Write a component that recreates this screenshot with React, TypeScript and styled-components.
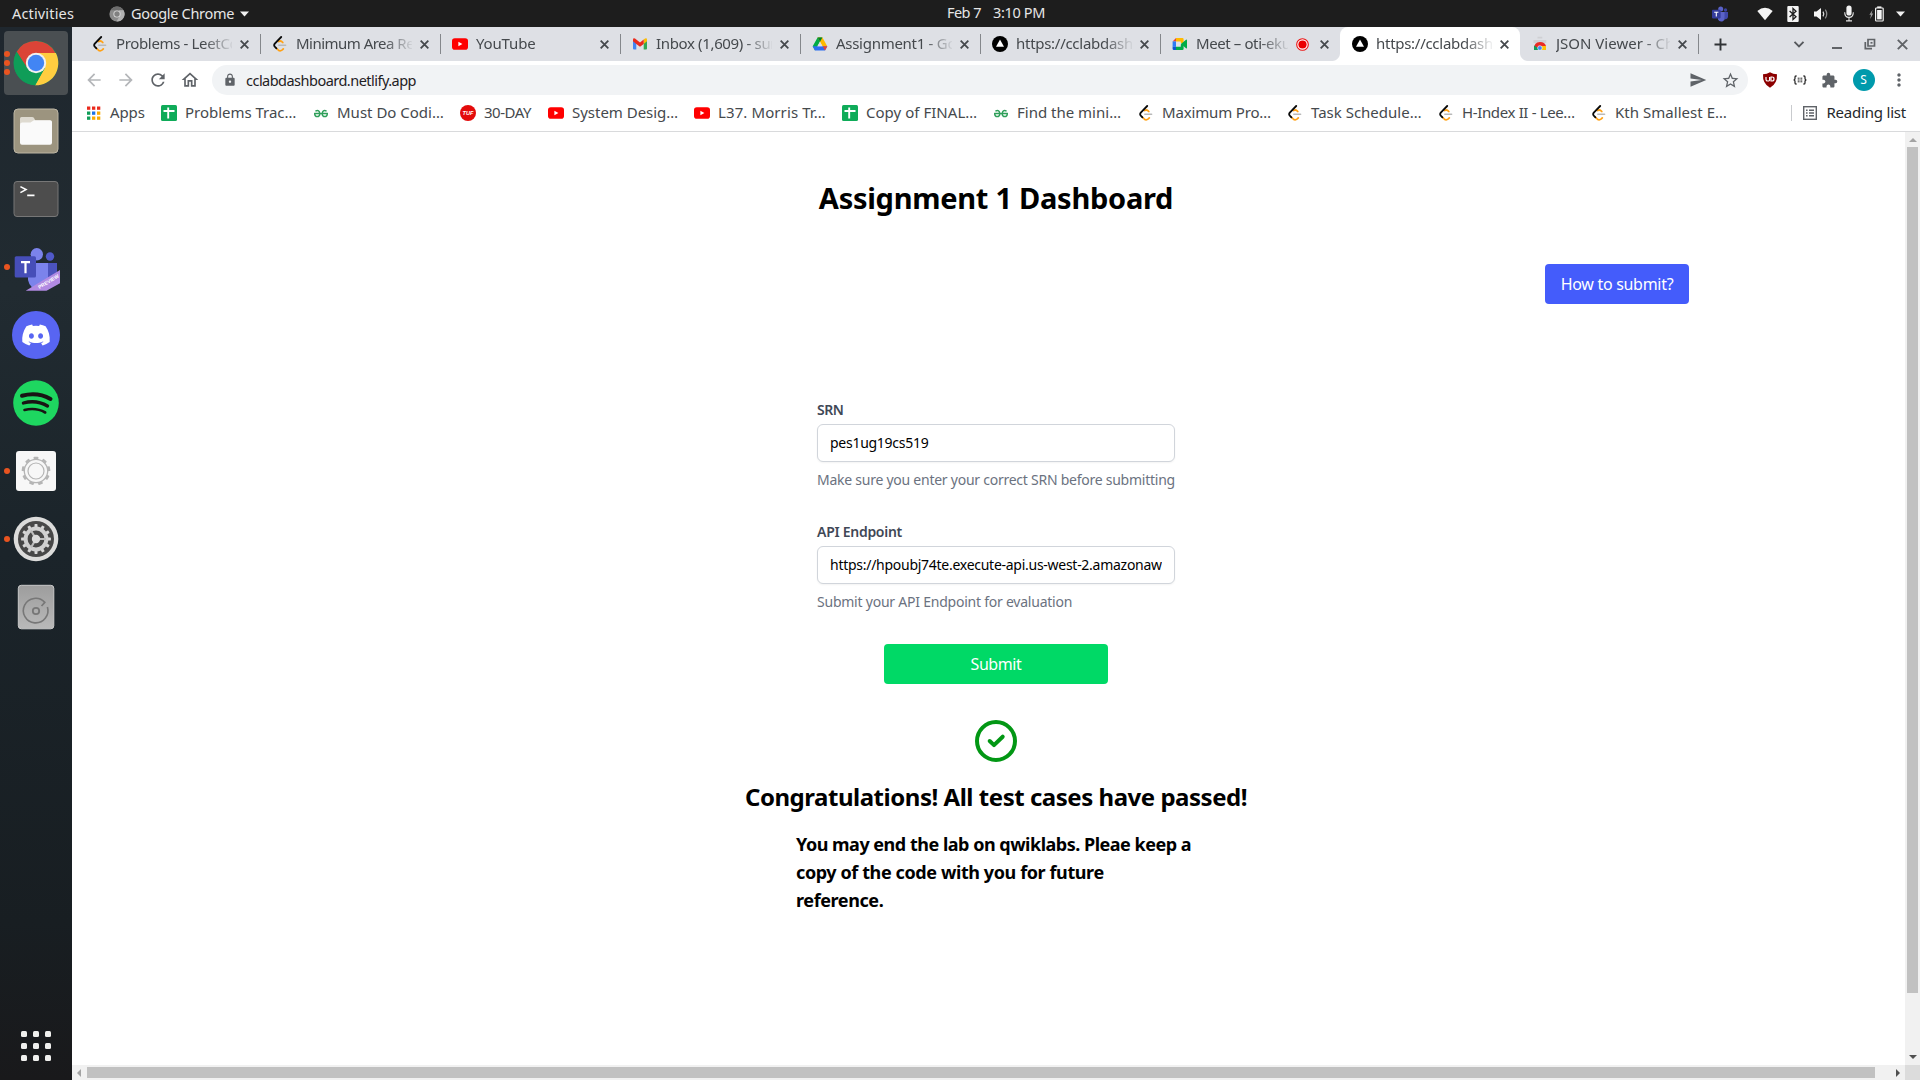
import React from 'react';
import styled, { createGlobalStyle, css } from 'styled-components';
import { FaDiscord } from 'react-icons/fa';
import { MdExtension, MdLock, MdRefresh, MdOutlineHome, MdArrowBack, MdArrowForward, MdStarBorder, MdSend, MdMoreVert } from 'react-icons/md';

const GlobalStyle = createGlobalStyle`
  * { box-sizing: border-box; }
  html, body { margin: 0; padding: 0; }
  body { font-family: "Noto Sans", "Open Sans", sans-serif; background: #fff; overflow: hidden; }
  svg { display: block; flex: none; }
`;

const Desktop = styled.div`
  width: 1920px;
  height: 1080px;
  display: flex;
  flex-direction: column;
  overflow: hidden;
`;

const Label = styled.span<{ $ls?: number }>`
  letter-spacing: ${(p) => p.$ls ?? 0}px;
  white-space: pre;
`;

/* ---------- system bar ---------- */

const SystemBar = styled.header`
  height: 27px;
  flex: none;
  display: flex;
  align-items: center;
  background: #1d1d1d;
  color: #e6e6e6;
  font-size: 14.5px;
  line-height: 27px;
`;

const SystemLeft = styled.div`
  width: 947px;
  padding-left: 12px;
  display: flex;
  align-items: center;
`;

const ActivitiesLabel = styled(Label)`
  width: 97px;
`;

const AppMenu = styled.div`
  display: flex;
  align-items: center;
  & > svg:first-child { margin-right: 6px; }
  & > svg:last-child { margin-left: 6px; }
`;

const Clock = styled.div`
  display: flex;
  gap: 12px;
  flex: 1;
  line-height: 25px;
  padding-bottom: 2px;
`;

const StatusIcons = styled.div`
  display: flex;
  align-items: center;
  gap: 12px;
  padding-right: 15px;
  & > svg:first-child { margin-right: 17px; }
  & > svg:last-child { margin-left: -1px; }
`;

/* ---------- dock ---------- */

const Workspace = styled.div`
  flex: 1;
  display: flex;
  min-height: 0;
`;

const Dock = styled.nav`
  width: 72px;
  flex: none;
  padding: 2px 0 19px;
  display: flex;
  flex-direction: column;
  background: linear-gradient(#1f272e 0%, #212b31 25%, #1b242a 50%, #181e22 85%, #19191b 100%);
`;

const DockItem = styled.div<{ $focused?: boolean }>`
  position: relative;
  height: 68px;
  ${(p) => p.$focused && css`
    &::before {
      content: '';
      position: absolute;
      inset: 2px 4px;
      border-radius: 4px;
      background: #4a4f52;
    }
  `}
  & > svg { position: relative; }
`;

const RunningDots = styled.div`
  position: absolute;
  z-index: 1;
  left: 4px;
  top: 0;
  height: 68px;
  display: flex;
  flex-direction: column;
  justify-content: center;
  gap: 3px;
`;

const RunningDot = styled.i`
  width: 6px;
  height: 6px;
  border-radius: 50%;
  background: #e95420;
`;

const AppGrid = styled.div`
  margin: auto auto 0;
  display: grid;
  grid-template-columns: repeat(3, 6px);
  gap: 6px;
`;

const AppGridDot = styled.i`
  width: 6px;
  height: 6px;
  border-radius: 1.5px;
  background: #f0f0ee;
`;

/* ---------- browser ---------- */

const Browser = styled.div`
  flex: 1;
  min-width: 0;
  display: flex;
  flex-direction: column;
`;

const TabStrip = styled.div`
  height: 34px;
  flex: none;
  display: flex;
  padding-left: 8px;
  background: #dee0e5;
  color: #45494d;
`;

const Tab = styled.div<{ $active?: boolean; $divider?: boolean; $width?: number }>`
  position: relative;
  width: ${(p) => p.$width ?? 180}px;
  flex: none;
  display: flex;
  align-items: center;
  padding: 0 11px 0 12px;
  font-size: 15px;
  ${(p) => p.$divider && css`
    &::after {
      content: '';
      position: absolute;
      right: -1px;
      top: 7px;
      width: 1px;
      height: 20px;
      background: #84878b;
    }
  `}
  ${(p) => p.$active && css`
    background: #fff;
    border-radius: 8px 8px 0 0;
    &::before, &::after {
      content: '';
      position: absolute;
      bottom: 0;
      width: 8px;
      height: 8px;
    }
    &::before { left: -8px; background: radial-gradient(circle at 0 0, transparent 7.5px, #fff 8.5px); }
    &::after { right: -8px; background: radial-gradient(circle at 100% 0, transparent 7.5px, #fff 8.5px); }
  `}
`;

const TabTitle = styled(Label)`
  flex: 1;
  min-width: 0;
  margin: 0 8px 0 8px;
  padding-bottom: 2px;
  overflow: hidden;
  line-height: 24px;
  mask-image: linear-gradient(to right, #000 calc(100% - 28px), rgba(0, 0, 0, 0.08));
`;

const TabIcon = styled.span`
  width: 16px;
  height: 16px;
  flex: none;
`;

const RecordingMark = styled.span`
  margin-right: 11px;
  flex: none;
`;

const WindowControls = styled.div`
  flex: 1;
  display: flex;
  align-items: center;
  justify-content: flex-end;
  gap: 21px;
  padding: 0 12px 0 16px;
  & > svg:first-child { margin-right: auto; }
  & > svg:nth-child(2) { margin-right: 5px; }
`;

const Toolbar = styled.div`
  height: 38px;
  flex: none;
  display: flex;
  align-items: center;
  padding-left: 12px;
  background: #fff;
  color: #5f6368;
`;

const NavButtons = styled.div`
  display: flex;
  gap: 12px;
  width: 128px;
  & > svg:nth-child(-n + 2) { color: #b4b6b9; }
`;

const AddressBar = styled.div`
  width: 1536px;
  height: 30px;
  border-radius: 15px;
  background: #f1f3f5;
  display: flex;
  align-items: center;
  padding: 0 8px 0 11px;
`;

const Address = styled(Label)`
  flex: 1;
  margin-left: 9px;
  padding-bottom: 1px;
  font-size: 14.5px;
  color: #1f2124;
`;

const AddressActions = styled.div`
  display: flex;
  gap: 14px;
`;

const Extensions = styled.div`
  flex: 1;
  display: flex;
  align-items: center;
  justify-content: space-between;
  padding: 0 11px 0 14px;
`;

const Avatar = styled.span`
  width: 22px;
  height: 22px;
  border-radius: 50%;
  background: #009aac;
  color: #fff;
  font-size: 12px;
  line-height: 22px;
  text-align: center;
`;

const BookmarkBar = styled.div`
  height: 33px;
  flex: none;
  display: flex;
  padding: 0 14px 4px;
  border-bottom: 1px solid #d9dadc;
  background: #fff;
  color: #45494d;
  font-size: 15px;
`;

const BookmarkLabel = styled(Label)`
  padding-bottom: 2px;
`;

const Bookmark = styled.div<{ $width: number }>`
  width: ${(p) => p.$width}px;
  display: flex;
  align-items: center;
  gap: 8px;
`;

const ReadingList = styled.div`
  margin-left: auto;
  height: 16px;
  align-self: center;
  display: flex;
  align-items: center;
  gap: 9px;
  padding-left: 11px;
  border-left: 1px solid #c9cbce;
  color: #25282b;
`;

/* ---------- page ---------- */

const Viewport = styled.div`
  flex: 1;
  min-height: 0;
  display: grid;
  grid-template-columns: 1fr 15px;
  grid-template-rows: 1fr 15px;
`;

const Page = styled.main`
  overflow: hidden;
  background: #fff;
`;

const PageBody = styled.div`
  width: 1848px;
  display: flex;
  flex-direction: column;
  align-items: center;
  padding-top: 44px;
`;

const Title = styled.h1`
  margin: 0;
  font-size: 29px;
  line-height: 43px;
  font-weight: 700;
  color: #000;
`;

const HelpRow = styled.div`
  align-self: stretch;
  display: flex;
  justify-content: flex-end;
  padding: 45px 231px 0 0;
`;

const Button = styled.button<{ $tone: 'blue' | 'green'; $width: number }>`
  width: ${(p) => p.$width}px;
  height: 40px;
  padding: 0;
  border: 0;
  border-radius: 4px;
  background: ${(p) => (p.$tone === 'blue' ? '#445cfb' : '#00d966')};
  color: #fff;
  font: 16px "Noto Sans", sans-serif;
`;

const Form = styled.form`
  width: 358px;
  margin-top: 96px;
  display: flex;
  flex-direction: column;
`;

const Field = styled.label`
  display: flex;
  flex-direction: column;
  height: 122px;
  font-size: 14px;
  line-height: 20px;
`;

const FieldName = styled(Label)`
  font-weight: 600;
  color: #3f4856;
`;

const TextInput = styled.input<{ $ls: number }>`
  width: 358px;
  height: 38px;
  margin: 4px 0 8px;
  padding: 0 12px 2px;
  border: 1px solid #d1d5db;
  border-radius: 6px;
  box-shadow: 0 1px 2px rgba(0, 0, 0, 0.05);
  font: 14px "Noto Sans", sans-serif;
  letter-spacing: ${(p) => p.$ls}px;
  color: #000;
  outline: none;
`;

const Hint = styled(Label)`
  color: #6b7280;
`;

const SubmitRow = styled.div`
  display: flex;
  justify-content: center;
  margin-bottom: 36px;
`;

const Success = styled.h2`
  margin: 19px 0 17px;
  font-size: 24px;
  line-height: 32px;
  font-weight: 700;
  color: #000;
`;

const Notice = styled.p`
  width: 400px;
  margin: 0;
  display: flex;
  flex-direction: column;
  font-size: 18px;
  line-height: 28px;
  font-weight: 700;
  color: #000;
`;

/* ---------- scroll bars ---------- */

const VerticalScroll = styled.div`
  background: #f1f1f1;
  display: flex;
  flex-direction: column;
  align-items: center;
  padding: 6px 0;
`;

const VerticalThumb = styled.div`
  width: 11px;
  height: 846px;
  margin: 5px 0 auto;
  background: #c1c1c1;
`;

const HorizontalScroll = styled.div`
  background: #f1f1f1;
  display: flex;
  align-items: center;
  padding: 0 5px;
`;

const HorizontalThumb = styled.div`
  width: 1788px;
  height: 11px;
  margin: 0 auto 0 6px;
  background: #c1c1c1;
`;

const ScrollCorner = styled.div`
  background: #dcdcdc;
`;

/* ---------- small icons ---------- */

const LeetCode = () => (
  <svg width="16" height="16" viewBox="0 0 16 16" fill="none" strokeLinecap="round">
    <path d="M6.6 5.6Q8.8 4 10.8 6.600" stroke="#ffa116" strokeWidth="1.7" />
    <path d="M4.2 12 6.4 14.2Q8.3 15.5 10.3 13.9L11.3 12.9" stroke="#ffa116" strokeWidth="1.7" />
    <path d="M9.2 1 2.8 7.6Q1.5 9.2 2.8 10.7L4.4 12.3" stroke="#0a0a0a" strokeWidth="1.8" />
    <path d="M6.8 9.3H13.6" stroke="#b9b9b9" strokeWidth="1.5" />
  </svg>
);

const YouTube = () => (
  <svg width="16" height="16" viewBox="0 0 16 16">
    <rect y="2.3" width="16" height="11.4" rx="2.8" fill="#f00" />
    <path d="M6.4 5.7v4.6L10.4 8z" fill="#fff" />
  </svg>
);

const Gmail = () => (
  <svg width="16" height="16" viewBox="0 0 16 16">
    <path d="M1 4.5 4.3 7v6.5H2a1 1 0 0 1-1-1z" fill="#4285f4" />
    <path d="M15 4.5 11.7 7v6.5H14a1 1 0 0 0 1-1z" fill="#34a853" />
    <path d="M11.7 3.5 13 2.6q2-.8 2 1.2v1.4L11.7 8z" fill="#fbbc04" />
    <path d="M1 5.2V3.8q0-2 2-1.2L8 6.4l3.7-2.9V8L8 10.7 4.3 8z" fill="#ea2a1d" />
  </svg>
);

const Drive = () => (
  <svg width="16" height="16" viewBox="0 0 16 16">
    <path d="M5.6 1.5h4.8L8 5.6 3 14.5.7 10.2z" fill="#00ac47" />
    <path d="M5.6 1.5h4.8l4.9 8.7h-4.8z" fill="#ffba00" />
    <path d="M5.6 1.5h4.8L8 5.7z" fill="#00832d" />
    <path d="M.7 10.2h14.6L13 14.5H3z" fill="#2d6ff2" />
    <path d="M10.7 10.2h4.6L13 14.5z" fill="#ea4335" />
    <path d="M8 5.800 10.400 10.200H5.500z" fill="#dee0e5" />
  </svg>
);

const Netlify = () => (
  <svg width="16" height="16" viewBox="0 0 16 16">
    <circle cx="8" cy="8" r="8" fill="#000" />
    <path d="M8 3.600 12 10.800H4z" fill="#fff" />
  </svg>
);

const Meet = () => (
  <svg width="16" height="16" viewBox="0 0 16 16">
    <path d="M.6 5.4 4 2v3.4z" fill="#ea4335" />
    <path d="M.6 5.4H4v5.4H.6z" fill="#2d7bf5" />
    <path d="M.6 10.8H4V14H1.8Q.6 14 .6 12.8z" fill="#0b57d0" />
    <path d="M4 2h6.4q1.2 0 1.2 1.2V8L8.8 7V5.4H4z" fill="#ffba00" />
    <path d="M4 10.8h4.8V8.4L11.6 6v6.8q0 1.2-1.2 1.2H4z" fill="#00ac47" />
    <path d="M9 8 14 3.7q1-.7 1 .5v7.6q0 1.2-1 .5z" fill="#00ac47" />
  </svg>
);

const WebStore = () => (
  <svg width="16" height="16" viewBox="0 0 16 16">
    <path d="M5.5.8h4.800v1.600H5.500zM1.500 4h12.800v3H1.500z" fill="#cfd0d4" />
    <path d="M2 12.8Q2 6 8 6q4.8 0 6 4H8q-2 0-2 2.8z" fill="#ea2a24" />
    <path d="M2 9.5 6 12l1.3 2H2z" fill="#0f9d58" />
    <path d="M9.2 10H14v4H8z" fill="#ffc107" />
    <circle cx="7.9" cy="12" r="2.3" fill="#4285f4" stroke="#fff" strokeWidth=".6" />
  </svg>
);

const AppsGlyph = () => (
  <svg width="16" height="16" viewBox="0 0 16 16">
    {['#ea2a1d', '#ea2a1d', '#ea2a1d', '#0f9d58', '#1a73e8', '#f9ab00', '#0f9d58', '#f9ab00', '#f9ab00'].map((c, i) => (
      <rect key={i} x={1 + (i % 3) * 5} y={1.5 + Math.floor(i / 3) * 5} width="3.3" height="3.3" fill={c} />
    ))}
  </svg>
);

const Sheets = () => (
  <svg width="16" height="16" viewBox="0 0 16 16">
    <rect width="16" height="16" rx="1.5" fill="#0fab59" />
    <path d="M2.5 6h11M7.2 2.5v11" stroke="#fff" strokeWidth="1.9" />
  </svg>
);

const Geeks = () => (
  <svg width="16" height="16" viewBox="0 0 16 16" fill="none" stroke="#2f9f5a" strokeWidth="1.5">
    <path d="M1.200 8.600H14.800M2.400 6.100Q6.600 4.300 6.700 8.600A2.500 2.500 0 1 1 1.800 8.600M13.600 6.100Q9.400 4.300 9.300 8.600A2.500 2.500 0 1 0 14.200 8.600" />
  </svg>
);

const Tuf = () => (
  <svg width="16" height="16" viewBox="0 0 16 16">
    <circle cx="8" cy="8" r="8" fill="#e30b0b" />
    <text x="8" y="10.1" textAnchor="middle" fontFamily="Liberation Sans, sans-serif" fontSize="5.6" fontWeight="700" fontStyle="italic" fill="#fff">TUF</text>
  </svg>
);

const ReadingGlyph = () => (
  <svg width="14" height="14" viewBox="0 0 14 14" fill="none" stroke="#5f6368" strokeWidth="1.4">
    <rect x=".7" y=".7" width="12.6" height="12.6" />
    <path d="M3 4.2h1.6M6 4.2h5M3 7h1.6M6 7h5M3 9.8h1.6M6 9.8h5" />
  </svg>
);

const CloseGlyph = ({ size = 9, color = '#45494d', weight = 1.6 }: { size?: number; color?: string; weight?: number }) => (
  <svg width={size} height={size} viewBox="0 0 8 8" stroke={color} strokeWidth={weight}>
    <path d="M.6.6 7.4 7.4M7.4.6.6 7.4" />
  </svg>
);

const Recording = () => (
  <svg width="13" height="13" viewBox="0 0 13 13">
    <circle cx="6.5" cy="6.5" r="5.8" fill="#fff" stroke="#ea1010" strokeWidth="1.1" />
    <circle cx="6.5" cy="6.5" r="4.1" fill="#ea0000" />
  </svg>
);

const Caret = ({ w }: { w: number }) => (
  <svg width={w} height="6" viewBox="0 0 10 6"><path d="M0 .3h10L5 5.7z" fill="#f0f0f0" /></svg>
);

const GreyChrome = () => (
  <svg width="16" height="16" viewBox="0 0 16 16">
    <circle cx="8" cy="8" r="7.6" fill="#8b8b8b" />
    <path d="M1.4 4.2A7.6 7.6 0 0 1 14.6 4.3H8z" fill="#6d6d6d" />
    <path d="M14.6 4.3A7.6 7.6 0 0 1 7.5 15.6L11 9.5 10 4.3z" fill="#b2b2b2" />
    <circle cx="8" cy="8" r="3.6" fill="#dcdcdc" />
    <circle cx="8" cy="8" r="2.7" fill="#808080" />
  </svg>
);

const TrayTeams = () => (
  <svg width="16" height="16" viewBox="0 0 16 16">
    <circle cx="8.7" cy="3" r="2.5" fill="#5a62c8" />
    <circle cx="13.5" cy="4" r="1.7" fill="#3c439f" />
    <path d="M6 6h7v5.5a3.7 3.7 0 0 1-7 2z" fill="#5a62c8" />
    <path d="M12.5 6H16v4.5a3 3 0 0 1-3.5 2.7z" fill="#4048ab" />
    <rect y="3.8" width="8.6" height="8.6" rx=".8" fill="#343c9c" />
    <path d="M2.2 6.2h4.2M4.3 6.2v4.2" stroke="#fff" strokeWidth="1.1" />
  </svg>
);

const Wifi = () => (
  <svg width="16" height="16" viewBox="0 0 16 16"><path d="M.3 5Q8-1.400 15.700 5L8 14.300z" fill="#f4f4f4" /></svg>
);

const Bluetooth = () => (
  <svg width="16" height="18" viewBox="0 0 16 18">
    <rect x="2.3" y="1" width="11.4" height="16" rx="1" fill="#f4f4f4" />
    <path d="M4.6 5.9 11 11.7 8 14.5V3.5L11 6.2 4.6 12.1" fill="none" stroke="#1d1d1d" strokeWidth="1.3" />
  </svg>
);

const Volume = () => (
  <svg width="16" height="16" viewBox="0 0 16 16" fill="none">
    <path d="M1 5.5h2.5L8 2v12L3.5 10.5H1z" fill="#f4f4f4" />
    <path d="M10 5.6Q11.6 8 10 10.4" stroke="#e4e4e4" strokeWidth="1.2" />
    <path d="M12.3 3.6Q15.2 8 12.3 12.4" stroke="#8f8f8f" strokeWidth="1.2" />
  </svg>
);

const Microphone = () => (
  <svg width="16" height="17" viewBox="0 0 16 17" fill="none">
    <rect x="5.4" y=".5" width="5.2" height="10" rx="2.6" fill="#f4f4f4" />
    <path d="M3.7 7.2Q3.7 12.4 8 12.4T12.3 7.2M8 12.4V16M5 15.9h6" stroke="#e4e4e4" strokeWidth="1.1" />
  </svg>
);

const Battery = () => (
  <svg width="16" height="16" viewBox="0 0 16 16">
    <path d="M3.6 3.8.4 8.8H2L1.2 13 4.2 7.6H2.6z" fill="#a0a0a0" />
    <path d="M8.2.4h4.2V2H8.2z" fill="#f4f4f4" />
    <rect x="6.6" y="2" width="7.6" height="13" rx=".8" fill="none" stroke="#f4f4f4" strokeWidth="1.2" />
    <rect x="8.1" y="4" width="4.6" height="9.4" fill="#f4f4f4" />
  </svg>
);

const Shield = () => (
  <svg width="16" height="16" viewBox="0 0 16 16">
    <path d="M8 .2Q11 2.2 15 2.2 15.6 11.5 8 15.8.4 11.5 1 2.2 5 2.2 8 .2z" fill="#8c0000" />
    <path d="M4 5v2.4q0 1.6 1.9 1.6T7.6 7.4V5M9 5v4h1q2 0 2-2t-2-2z" fill="none" stroke="#fff" strokeWidth="1.2" />
  </svg>
);

const JsonViewerGlyph = () => (
  <svg width="14" height="10" viewBox="0 0 14 10" fill="none" stroke="#2c2c2c" strokeWidth="1.3">
    <path d="M3.600 1H3Q2 1 2 2v1.600Q2 5 .6 5 2 5 2 6.400V8Q2 9 3 9h.6M10.400 1h.6q1 0 1 1v1.600Q12 5 13.400 5 12 5 12 6.400V8q0 1-1 1h-.6" />
    <path d="M4.700 3.200H9.300M4.700 5H9.300M4.700 6.800H9.300" strokeWidth="1" strokeDasharray="1.900 .8" />
  </svg>
);

/* ---------- dock icons ---------- */

const DockSvg = ({ children }: { children: React.ReactNode }) => (
  <svg width="72" height="68" viewBox="0 0 72 68" fill="none">{children}</svg>
);

const teeth = (n: number, r: number, w: number, h: number, fill: string) =>
  Array.from({ length: n }, (_, i) => (
    <rect key={i} x={36 - w / 2} y={34 - r - h} width={w} height={h + 1} rx=".6" fill={fill} transform={`rotate(${(360 / n) * i} 36 34)`} />
  ));

const ChromeIcon = () => (
  <DockSvg>
    <circle cx="36" cy="34" r="22.3" fill="#0f9d58" />
    <path d="M36 34 16.7 22.8A22.3 22.3 0 0 1 55.5 24z" fill="#db4437" />
    <path d="M36 24H55.9A22.3 22.3 0 0 1 35 56.3L45 39z" fill="#ffcd40" />
    <path d="M16.7 22.8 26.8 40 36 34V24z" fill="#db4437" />
    <path d="M16.7 22.8A22.3 22.3 0 0 0 35.2 56.3L44 40 27 38.5z" fill="#0f9d58" />
    <circle cx="36" cy="34" r="10.2" fill="#f1f1f1" />
    <circle cx="36" cy="34" r="8.2" fill="#4285f4" />
  </DockSvg>
);

const FilesIcon = () => (
  <DockSvg>
    <rect x="14" y="12" width="44" height="44" rx="4" fill="#9c947f" stroke="#bcb5a4" />
    <path d="M20 21.5q0-1.5 1.5-1.5H32q1.5 0 2 1l1.3 2.4H50q2 0 2 2V30H20z" fill="#dedad0" />
    <path d="M20 28q0-2.4 2.3-2.4h8.2l3.5-2.4h16q2 0 2 2v20.5q0 2-2 2H22q-2 0-2-2z" fill="#fafafa" />
  </DockSvg>
);

const TerminalIcon = () => (
  <DockSvg>
    <rect x="14" y="16.5" width="44" height="35" rx="3" fill="#4d4d4d" stroke="#777" />
    <path d="m20.4 21.6 5.6 3-5.6 3M27.2 30.4h7.3" stroke="#fff" strokeWidth="1.6" />
  </DockSvg>
);

const TeamsIcon = () => (
  <DockSvg>
    <circle cx="50" cy="23.5" r="4.2" fill="#5059c9" />
    <path d="M46 30h11v13q-1 6-7 6h-4z" fill="#4b53bc" />
    <circle cx="36.8" cy="21.3" r="6.2" fill="#7b83eb" />
    <path d="M28 30h20v17q-1 9-10 9-8 0-10-9z" fill="#7b83eb" />
    <rect x="14.7" y="23.2" width="21.3" height="21.4" rx="1.6" fill="#464eb8" />
    <path d="M21 29.2h9M25.5 29.2v11" stroke="#fff" strokeWidth="2.2" />
    <path d="M25.7 57.8 60 37v13.2L46.5 57.8z" fill="#b18ae2" />
    <text transform="translate(39.5 56) rotate(-31)" fontFamily="Liberation Sans, sans-serif" fontWeight="700" fontSize="5" fill="#fff">PREVIEW</text>
  </DockSvg>
);

const DiscordIcon = () => (
  <DockSvg>
    <circle cx="36" cy="34" r="24" fill="#5865f2" />
    <FaDiscord x="21" y="19" width="30" height="30" size={30} color="#fff" />
  </DockSvg>
);

const SpotifyIcon = () => (
  <DockSvg>
    <circle cx="36" cy="34" r="22.8" fill="#1ed760" />
    <g stroke="#191414" strokeLinecap="round">
      <path d="M22 26.8Q37.5 22.6 50.5 30" strokeWidth="4" />
      <path d="M23.4 34Q36.5 30.4 47.5 37" strokeWidth="3.3" />
      <path d="M24.5 41Q36 38.2 45.2 43.5" strokeWidth="2.6" />
    </g>
  </DockSvg>
);

const GearAppIcon = () => (
  <DockSvg>
    <rect x="16" y="14" width="40" height="40" rx="3" fill="#f7f7f7" />
    {teeth(9, 11.5, 4.6, 2.8, '#b5b5b5')}
    <circle cx="36" cy="34" r="11.7" fill="#f7f7f7" stroke="#b5b5b5" strokeWidth="1.3" />
    <circle cx="36" cy="34" r="8" stroke="#b5b5b5" strokeWidth="1.2" />
  </DockSvg>
);

const SettingsIcon = () => (
  <DockSvg>
    <circle cx="36" cy="34" r="22.3" fill="#dcdcdb" />
    <circle cx="36" cy="34" r="18" fill="#484848" />
    {teeth(12, 11.5, 3, 3.4, '#d8d8d8')}
    <circle cx="36" cy="34" r="10.4" stroke="#d0d0d0" strokeWidth="4" />
    <path d="M36 34H46M36 34 31 25.5M36 34 31 42.5" stroke="#bdbdbd" strokeWidth="2.2" />
    <circle cx="36" cy="34" r="4.2" fill="#dcdcdc" />
  </DockSvg>
);

const DiskIcon = () => (
  <DockSvg>
    <defs>
      <linearGradient id="disk" x1="0" y1="0" x2="0" y2="1">
        <stop offset="0" stopColor="#9d9d9d" />
        <stop offset="1" stopColor="#b9b9b9" />
      </linearGradient>
    </defs>
    <rect x="18.3" y="12.3" width="35.5" height="43.5" rx="3" fill="url(#disk)" stroke="#c9c9c9" />
    <path d="M41.500 33 44.800 29.400A12.300 12.300 0 1 0 47.400 34" stroke="#777" strokeWidth="1.600" />
    <circle cx="36" cy="38" r="3.2" stroke="#777" strokeWidth="1.8" />
  </DockSvg>
);

/* ---------- data ---------- */

const dockItems = [
  { icon: <ChromeIcon />, dots: 3, focused: true },
  { icon: <FilesIcon />, dots: 0 },
  { icon: <TerminalIcon />, dots: 0 },
  { icon: <TeamsIcon />, dots: 1 },
  { icon: <DiscordIcon />, dots: 0 },
  { icon: <SpotifyIcon />, dots: 0 },
  { icon: <GearAppIcon />, dots: 1 },
  { icon: <SettingsIcon />, dots: 1 },
  { icon: <DiskIcon />, dots: 0 },
];

const tabs = [
  { icon: <LeetCode />, title: 'Problems - LeetCo', ls: -0.35, divider: true },
  { icon: <LeetCode />, title: 'Minimum Area Re', ls: -0.52, divider: true },
  { icon: <YouTube />, title: 'YouTube', ls: -0.16, divider: true },
  { icon: <Gmail />, title: 'Inbox (1,609) - sur', ls: -0.35, divider: true },
  { icon: <Drive />, title: 'Assignment1 - Go', ls: -0.28, divider: true },
  { icon: <Netlify />, title: 'https://cclabdash', ls: -0.28, divider: true },
  { icon: <Meet />, title: 'Meet – oti-eku', ls: -0.4, recording: true },
  { icon: <Netlify />, title: 'https://cclabdash', ls: -0.28, active: true },
  { icon: <WebStore />, title: 'JSON Viewer - Ch', ls: 0, divider: true, width: 178 },
];

const bookmarks = [
  { icon: <AppsGlyph />, title: 'Apps', ls: -0.1, width: 75 },
  { icon: <Sheets />, title: 'Problems Trac…', ls: -0.02, width: 152 },
  { icon: <Geeks />, title: 'Must Do Codi…', ls: 0, width: 147 },
  { icon: <Tuf />, title: '30-DAY', ls: -0.47, width: 88 },
  { icon: <YouTube />, title: 'System Desig…', ls: -0.02, width: 146 },
  { icon: <YouTube />, title: 'L37. Morris Tr…', ls: 0.1, width: 148 },
  { icon: <Sheets />, title: 'Copy of FINAL…', ls: 0.03, width: 151 },
  { icon: <Geeks />, title: 'Find the mini…', ls: 0, width: 145 },
  { icon: <LeetCode />, title: 'Maximum Pro…', ls: -0.16, width: 149 },
  { icon: <LeetCode />, title: 'Task Schedule…', ls: 0, width: 151 },
  { icon: <LeetCode />, title: 'H-Index II - Lee…', ls: -0.36, width: 153 },
  { icon: <LeetCode />, title: 'Kth Smallest E…', ls: 0.03, width: 140 },
];

export default function App() {
  return (
    <Desktop>
      <GlobalStyle />
      <SystemBar>
        <SystemLeft>
          <ActivitiesLabel $ls={0.16}>Activities</ActivitiesLabel>
          <AppMenu>
            <GreyChrome />
            <Label $ls={-0.31}>Google Chrome</Label>
            <Caret w={9} />
          </AppMenu>
        </SystemLeft>
        <Clock>
          <Label $ls={-0.54}>Feb 7</Label>
          <Label $ls={-0.35}>3:10 PM</Label>
        </Clock>
        <StatusIcons>
          <TrayTeams />
          <Wifi />
          <Bluetooth />
          <Volume />
          <Microphone />
          <Battery />
          <Caret w={9} />
        </StatusIcons>
      </SystemBar>
      <Workspace>
        <Dock>
          {dockItems.map((item, i) => (
            <DockItem key={i} $focused={item.focused}>
              <RunningDots>
                {Array.from({ length: item.dots }, (_, d) => <RunningDot key={d} />)}
              </RunningDots>
              {item.icon}
            </DockItem>
          ))}
          <AppGrid>
            {Array.from({ length: 9 }, (_, i) => <AppGridDot key={i} />)}
          </AppGrid>
        </Dock>
        <Browser>
          <TabStrip>
            {tabs.map((tab, i) => (
              <Tab key={i} $active={tab.active} $divider={tab.divider} $width={tab.width}>
                <TabIcon>{tab.icon}</TabIcon>
                <TabTitle $ls={tab.ls}>{tab.title}</TabTitle>
                {tab.recording && <RecordingMark><Recording /></RecordingMark>}
                <CloseGlyph />
              </Tab>
            ))}
            <WindowControls>
              <svg width="13" height="13" viewBox="0 0 13 13" stroke="#303336" strokeWidth="1.9"><path d="M6.5 .5v12M.5 6.5h12" /></svg>
              <svg width="12" height="12" viewBox="0 0 12 12" fill="none" stroke="#56595d" strokeWidth="1.9"><path d="m1.500 3.800 4.500 4.500 4.500-4.500" /></svg>
              <svg width="12" height="12" viewBox="0 0 12 12" stroke="#606367" strokeWidth="2"><path d="M1 10h10" /></svg>
              <svg width="12" height="12" viewBox="0 0 12 12" fill="none" stroke="#606367" strokeWidth="1.7"><path d="M4 1.500h6.500V8H4zM1.300 4v6.700H8" /><path d="M6.500 4.800h2" /></svg>
              <CloseGlyph size={11} color="#606367" weight={1.4} />
            </WindowControls>
          </TabStrip>
          <Toolbar>
            <NavButtons>
              <MdArrowBack size={20} />
              <MdArrowForward size={20} />
              <MdRefresh size={20} />
              <MdOutlineHome size={20} />
            </NavButtons>
            <AddressBar>
              <MdLock size={14} />
              <Address $ls={-0.52}>cclabdashboard.netlify.app</Address>
              <AddressActions>
                <MdSend size={18} />
                <MdStarBorder size={19} />
              </AddressActions>
            </AddressBar>
            <Extensions>
              <Shield />
              <JsonViewerGlyph />
              <MdExtension size={17} />
              <Avatar>S</Avatar>
              <MdMoreVert size={20} />
            </Extensions>
          </Toolbar>
          <BookmarkBar>
            {bookmarks.map((b) => (
              <Bookmark key={b.title} $width={b.width}>
                {b.icon}
                <BookmarkLabel $ls={b.ls}>{b.title}</BookmarkLabel>
              </Bookmark>
            ))}
            <ReadingList>
              <ReadingGlyph />
              <BookmarkLabel $ls={-0.21}>Reading list</BookmarkLabel>
            </ReadingList>
          </BookmarkBar>
          <Viewport>
            <Page>
              <PageBody>
                <Title><Label $ls={-0.27}>Assignment 1 Dashboard</Label></Title>
                <HelpRow>
                  <Button $tone="blue" $width={144}><Label $ls={-0.3}>How to submit?</Label></Button>
                </HelpRow>
                <Form>
                  <Field>
                    <FieldName $ls={-0.5}>SRN</FieldName>
                    <TextInput $ls={-0.27} readOnly value="pes1ug19cs519" />
                    <Hint $ls={-0.25}>Make sure you enter your correct SRN before submitting</Hint>
                  </Field>
                  <Field>
                    <FieldName $ls={-0.28}>API Endpoint</FieldName>
                    <TextInput $ls={-0.27} readOnly value="https://hpoubj74te.execute-api.us-west-2.amazonaw" />
                    <Hint $ls={-0.23}>Submit your API Endpoint for evaluation</Hint>
                  </Field>
                  <SubmitRow>
                    <Button type="button" $tone="green" $width={224}><Label $ls={-0.4}>Submit</Label></Button>
                  </SubmitRow>
                </Form>
                <svg width="42" height="42" viewBox="0 0 42 42" fill="none" stroke="#029714" strokeWidth="4" strokeLinecap="round" strokeLinejoin="round">
                  <circle cx="21" cy="21" r="19" />
                  <path d="m14.700 21 4.300 4.100 8.700-8.400" />
                </svg>
                <Success><Label $ls={-0.47}>Congratulations! All test cases have passed!</Label></Success>
                <Notice>
                  <Label $ls={-0.49}>You may end the lab on qwiklabs. Pleae keep a</Label>
                  <Label $ls={-0.4}>copy of the code with you for future</Label>
                  <Label $ls={-0.4}>reference.</Label>
                </Notice>
              </PageBody>
            </Page>
            <VerticalScroll>
              <svg width="8" height="4" viewBox="0 0 8 4"><path d="M4 0 8 4H0z" fill="#a3a3a3" /></svg>
              <VerticalThumb />
              <svg width="8" height="4" viewBox="0 0 8 4"><path d="M0 0h8L4 4z" fill="#505050" /></svg>
            </VerticalScroll>
            <HorizontalScroll>
              <svg width="4" height="8" viewBox="0 0 4 8"><path d="M4 0v8L0 4z" fill="#a3a3a3" /></svg>
              <HorizontalThumb />
              <svg width="4" height="8" viewBox="0 0 4 8"><path d="M0 0v8l4-4z" fill="#505050" /></svg>
            </HorizontalScroll>
            <ScrollCorner />
          </Viewport>
        </Browser>
      </Workspace>
    </Desktop>
  );
}
